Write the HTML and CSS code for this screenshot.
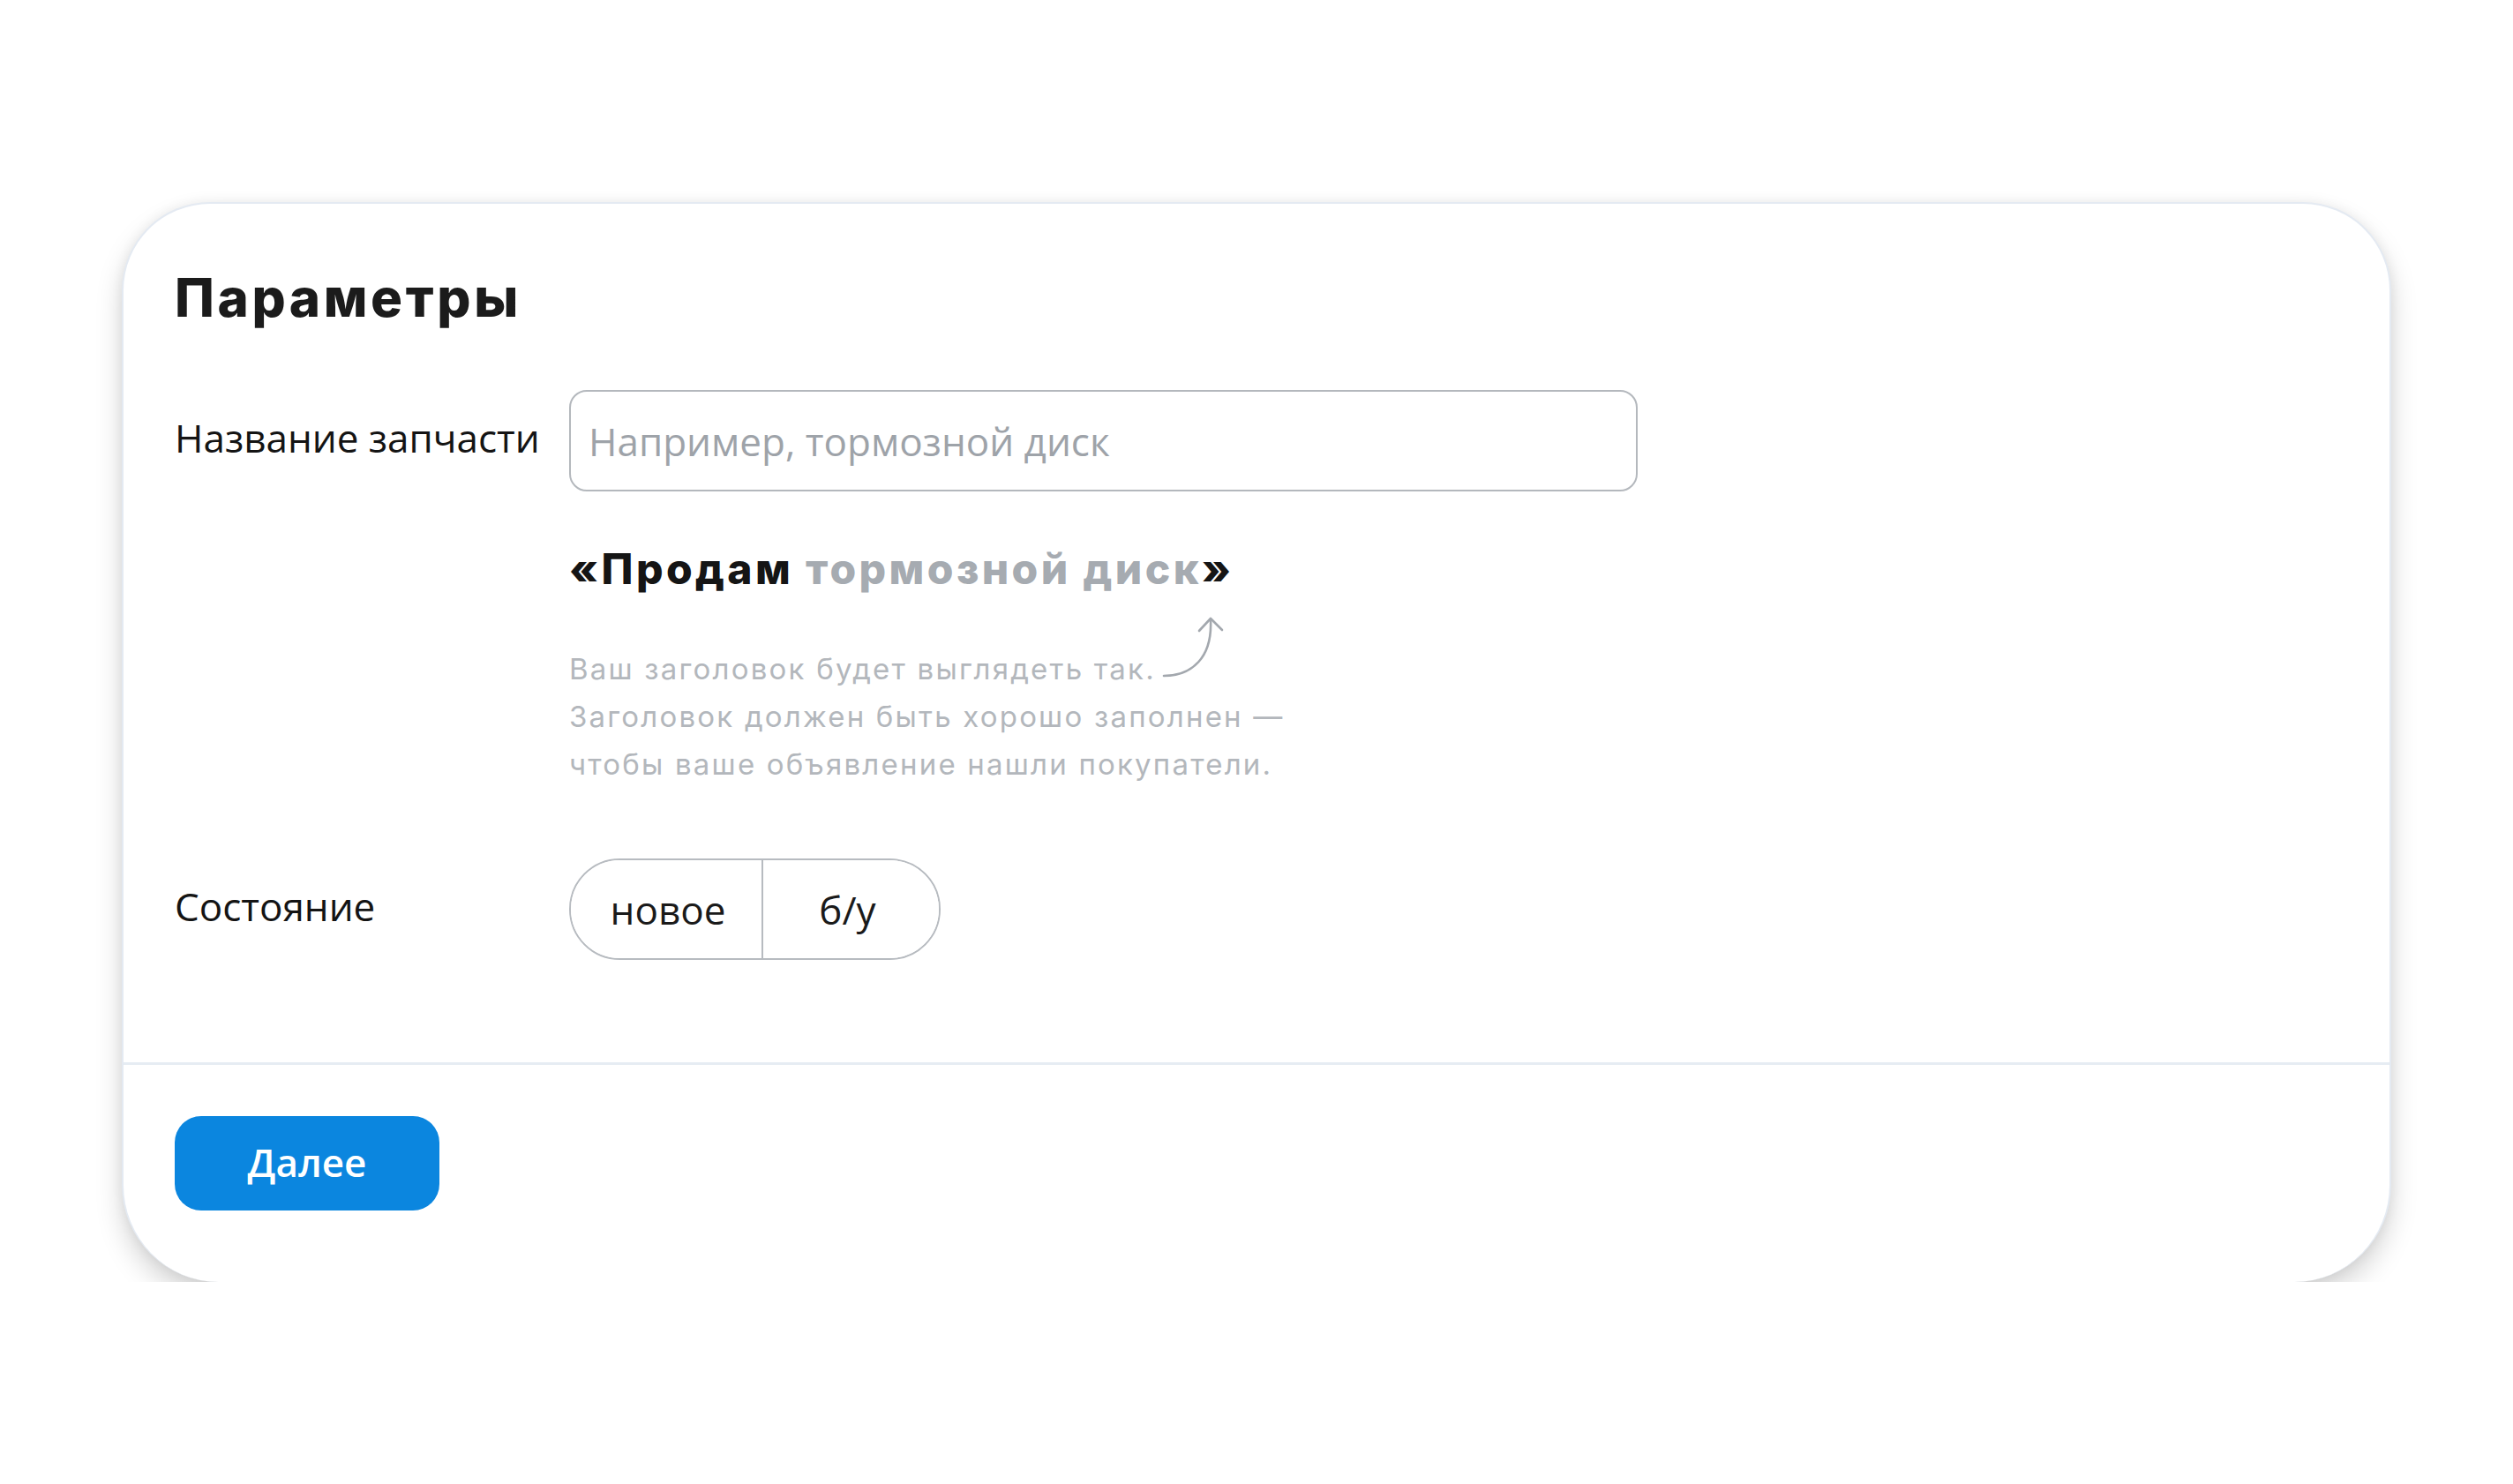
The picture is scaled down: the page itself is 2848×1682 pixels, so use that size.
FILE: index.html
```html
<!DOCTYPE html>
<html lang="ru">
<head>
<meta charset="utf-8">
<title>Параметры</title>
<link rel="stylesheet" href="styles.css">
</head>
<body>
<div class="page">
  <section class="card">
    <div class="card-body">
      <h1 class="heading">Параметры</h1>
      <div class="row row-name">
        <label class="label" for="part">Название запчасти</label>
        <div class="field">
          <input class="input" id="part" type="text" placeholder="Например, тормозной диск">
        </div>
      </div>
      <div class="preview">
        <div class="preview-title">«Продам <span class="muted">тормозной диск</span>»</div>
        <div class="helper">
          <p class="helper-line">Ваш заголовок будет выглядеть так.</p>
          <p class="helper-line">Заголовок должен быть хорошо заполнен —</p>
          <p class="helper-line">чтобы ваше объявление нашли покупатели.</p>
          <svg class="arrow" width="80" height="80" viewBox="0 0 80 80" fill="none" stroke="#a3a8ae" stroke-width="2.6" stroke-linecap="round" stroke-linejoin="round">
            <path d="M8 71 C40 71 63 50 61 8"/>
            <path d="M48 20 L61 6 L74 19"/>
          </svg>
        </div>
      </div>
      <div class="row row-state">
        <span class="label">Состояние</span>
        <div class="segmented">
          <button class="seg seg-first" type="button">новое</button>
          <button class="seg seg-last" type="button">б/у</button>
        </div>
      </div>
    </div>
    <div class="card-footer">
      <button class="btn-primary" type="button">Далее</button>
    </div>
  </section>
</div>
</body>
</html>
```
FILE: styles.css
```css
* { box-sizing: border-box; }
html, body { margin: 0; padding: 0; background: #ffffff; }
body { font-family: "Open Sans", "Noto Sans", sans-serif; color: #1a1a1a; }

.page {
  padding: 229px 138px 0;
}

.card {
  background: #fff;
  border: 2px solid #e4eaf2;
  border-bottom: 0;
  border-radius: 100px 100px 110px 110px;
  box-shadow: 0 16px 30px rgba(0, 0, 0, 0.17), 0 0 14px rgba(0, 0, 0, 0.06);
  height: 1224px;
  display: flex;
  flex-direction: column;
}

.card-body {
  padding: 70px 58px 116px;
  border-bottom: 3px solid #e6ecf3;
}

.heading {
  margin: 0;
  font-family: "Inter", sans-serif;
  font-weight: 800;
  font-size: 60px;
  line-height: 72px;
  color: #1b1b1b;
  letter-spacing: 3.6px;
}

.row {
  display: flex;
  align-items: center;
}
.row-name { margin-top: 69px; }
.row-state { margin-top: 80px; }

.label {
  width: 447px;
  flex: none;
  font-size: 44px;
  line-height: 60px;
  padding-bottom: 8px;
  color: #141414;
}

.field { flex: none; }

.input {
  display: block;
  width: 1211px;
  height: 115px;
  border: 2px solid #b4b8bd;
  border-radius: 20px;
  padding: 0 20px;
  font-family: "Open Sans", sans-serif;
  font-size: 44px;
  color: #1a1a1a;
  background: #fff;
  outline: none;
}
.input::placeholder { color: #9ea3a9; }

.preview {
  margin-left: 447px;
  margin-top: 59px;
}

.preview-title {
  font-family: "Inter", sans-serif;
  font-weight: 800;
  font-size: 48px;
  line-height: 58px;
  letter-spacing: 3.4px;
  color: #151515;
}
.muted { color: #a6abb1; }

.helper {
  position: relative;
  margin-top: 57px;
  width: max-content;
}
.helper-line {
  margin: 0;
  font-family: "Inter", sans-serif;
  font-size: 33px;
  line-height: 54px;
  letter-spacing: 2.2px;
  color: #b3b7bc;
}
.arrow {
  position: absolute;
  left: 666px;
  top: -36px;
}

.segmented {
  display: flex;
  height: 115px;
  border: 2px solid #b7bbc0;
  border-radius: 58px;
  overflow: hidden;
}
.seg {
  border: 0;
  background: #fff;
  font-family: "Open Sans", sans-serif;
  font-size: 44px;
  color: #1a1a1a;
  padding: 0;
  height: 100%;
}
.seg-first { width: 218px; border-right: 2px solid #b7bbc0; padding-left: 4px; }
.seg-last { width: 199px; padding-right: 8px; }

.card-footer {
  padding: 58px 58px 0;
}

.btn-primary {
  width: 300px;
  height: 107px;
  border: 0;
  border-radius: 30px;
  background: #0b86df;
  color: #fff;
  font-family: "Open Sans", sans-serif;
  font-weight: 600;
  font-size: 44px;
  padding: 0 0 4px;
}
```
